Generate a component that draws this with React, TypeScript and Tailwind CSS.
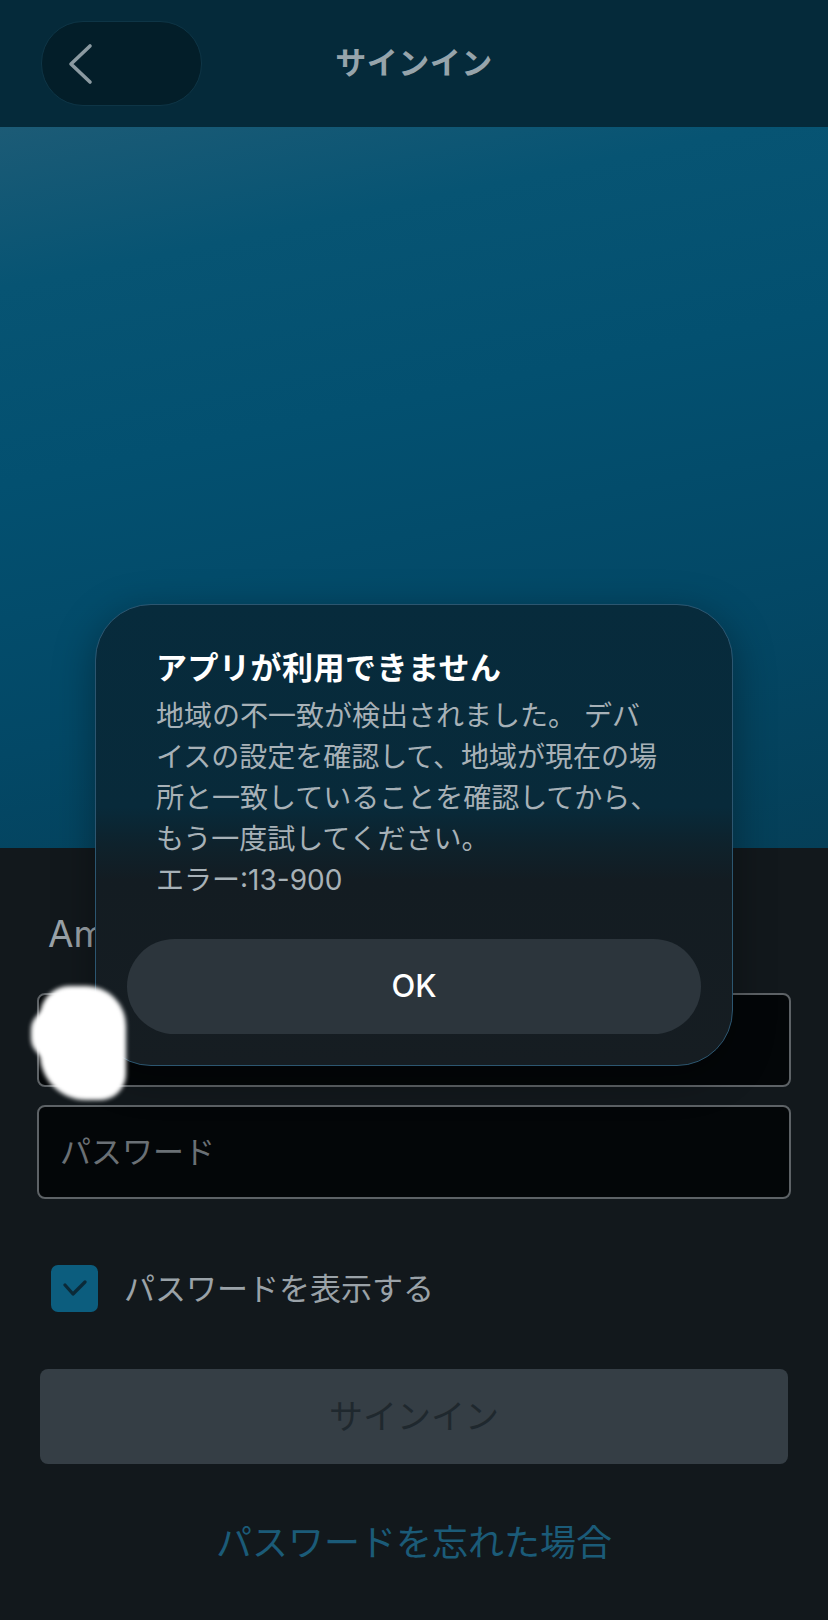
import React from "react";

const font = "font-['Inter','Noto_Sans_CJK_JP',sans-serif]";

function BackButton() {
  return (
    <button className="w-[161px] h-[85px] rounded-[42px] bg-[#031e29] border border-[#0e3546] flex items-center pl-[25px]">
      <svg width="26" height="42" viewBox="0 0 26 42" fill="none">
        <path
          d="M23 3 L4 21 L23 39"
          stroke="#8b9aa1"
          strokeWidth="3.6"
          strokeLinecap="round"
          strokeLinejoin="round"
        />
      </svg>
    </button>
  );
}

function ErrorDialog() {
  return (
    <div className="absolute left-[95px] top-[604px] w-[638px] rounded-[56px] border border-[#2c5670] bg-[linear-gradient(180deg,#072b3c_0%,#082a3a_44%,#0e222c_52%,#131c22_60%,#161d22_100%)] shadow-[0_10px_40px_rgba(0,0,0,0.35)] px-[31px] pt-[43px] pb-[31px]">
      <div className="px-[29px]">
        <h2 className="text-[31px] leading-[40px] font-bold text-white tracking-[0.5px]">
          アプリが利用できません
        </h2>
        <p className="mt-[8px] text-[28px] leading-[41px] text-[#a7b1b7]">
          地域の不一致が検出されました。 デバ
          <br />
          イスの設定を確認して、地域が現在の場
          <br />
          所と一致していることを確認してから、
          <br />
          もう一度試してください。
          <br />
          エラー:13-900
        </p>
      </div>
      <button className="mt-[38px] w-full h-[95px] rounded-full bg-[#2c353c] text-white text-[31px] font-medium">
        OK
      </button>
    </div>
  );
}

export default function App() {
  return (
    <div className={`relative w-[828px] h-[1620px] overflow-hidden bg-[#12181c] ${font}`}>
      <header className="h-[127px] bg-[#052a3a] grid grid-cols-[1fr_auto_1fr] items-center px-[41px]">
        <div>
          <BackButton />
        </div>
        <h1 className="text-[31px] font-bold text-[#96a4ab] tracking-[0.5px]">サインイン</h1>
        <div />
      </header>

      <div className="h-[721px] bg-[linear-gradient(168deg,#1c5b76_0%,#075473_18%,#035070_40%,#034866_70%,#053f58_100%)]" />

      <main className="px-[37px] pt-[64px]">
        <div className="ml-[11px] text-[37px] leading-[44px] text-[#9aa2a8] whitespace-nowrap">
          Amazonアカウントでサインイン
        </div>
        <div className="mt-[37px] h-[94px] rounded-[8px] border-2 border-[#5d6266] bg-[#030608]" />
        <div className="mt-[18px] h-[94px] rounded-[8px] border-2 border-[#5d6266] bg-[#030608] flex items-center pl-[21px]">
          <span className="text-[31px] text-[#6a7075]">パスワード</span>
        </div>

        <label className="mt-[66px] ml-[14px] flex items-center gap-[26px]">
          <span className="w-[47px] h-[47px] rounded-[7px] bg-[#0c5d7e] flex items-center justify-center">
            <svg width="24" height="17" viewBox="0 0 24 17" fill="none">
              <path
                d="M2 5 L10 14 L22 2"
                stroke="#0b2a38"
                strokeWidth="3.2"
                strokeLinecap="round"
                strokeLinejoin="round"
              />
            </svg>
          </span>
          <span className="text-[31px] leading-[44px] text-[#9aa2a8]">パスワードを表示する</span>
        </label>

        <button className="mt-[57px] mx-[3px] w-[748px] h-[95px] rounded-[8px] bg-[#353e45] text-[34px] text-[#1f282e]">
          サインイン
        </button>

        <div className="mt-[57px] text-center text-[36px] leading-[44px] text-[#1b5b78]">
          パスワードを忘れた場合
        </div>
      </main>

      <ErrorDialog />

      {/* redaction smudge */}
      <div className="absolute left-[40px] top-[986px] w-[86px] h-[114px] bg-white rounded-[30px_40px_26px_46px] blur-[2px]" />
      <div className="absolute left-[31px] top-[1010px] w-[40px] h-[48px] bg-white rounded-[20px] blur-[2px]" />
    </div>
  );
}
